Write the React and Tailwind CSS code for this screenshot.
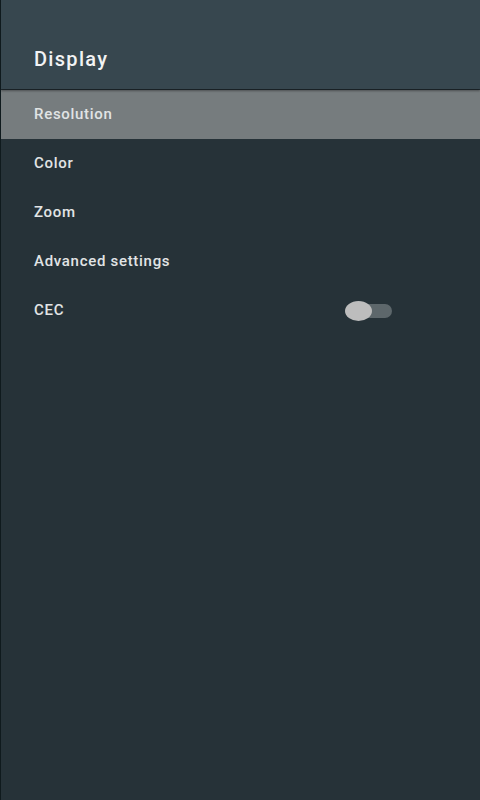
import React, { useState } from 'react';

const items = ['Resolution', 'Color', 'Zoom', 'Advanced settings', 'CEC'];

const App = () => {
    const [cec, setCec] = useState(false);

    return (
        <div className="w-[480px] h-[800px] flex flex-col bg-[#263238] border-l border-[#0f1a1d] overflow-hidden" style={{ fontFamily: 'Roboto, "Liberation Sans", sans-serif' }}>
            {/* Header */}
            <div className="h-[89px] shrink-0 bg-[#37474f] flex items-end pb-[15px] px-[33px] shadow-[0_2px_2px_rgba(0,0,0,0.35)] relative z-10">
                <h1 className="text-[20px] font-medium text-[#f2f3f4] tracking-[1.3px]">Display</h1>
            </div>

            {/* Menu */}
            <div className="flex flex-col pt-[1px]">
                {items.map((item, i) => (
                    <div
                        key={item}
                        className={`h-[49px] flex items-center justify-between pl-[33px] pr-[88px] ${i === 0 ? 'bg-[#767c7e]' : ''}`}
                    >
                        <span className="text-[15px] font-medium text-[#e1e4e5] tracking-[0.7px]">{item}</span>
                        {item === 'CEC' && (
                            <button type="button" onClick={() => setCec(!cec)} className="relative w-[47px] h-[20px] flex items-center">
                                <span className="absolute left-[1px] right-0 h-[14px] rounded-full bg-[#5d676b]" />
                                <span className="absolute left-0 w-[27px] h-[20px] rounded-[50%] bg-[#bdbdbd]" />
                            </button>
                        )}
                    </div>
                ))}
            </div>
        </div>
    );
};

export default App;
